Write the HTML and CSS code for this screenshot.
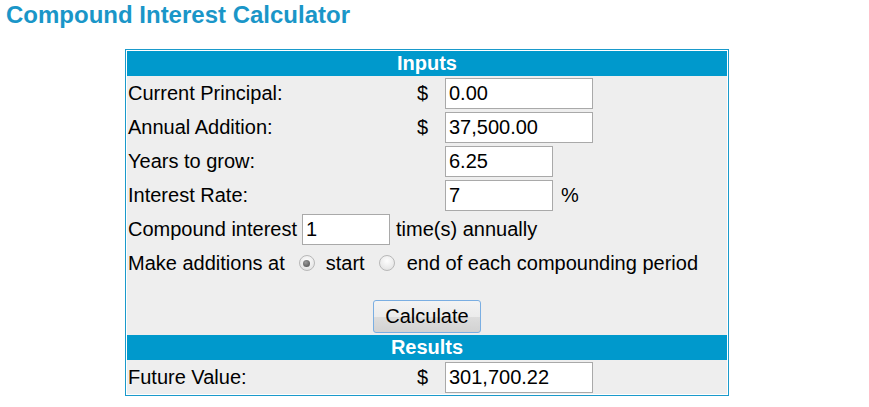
FILE: index.html
```html
<!DOCTYPE html>
<html>
<head>
<meta charset="utf-8">
<link rel="stylesheet" href="styles.css">
</head>
<body>
<h1 class="title">Compound Interest Calculator</h1>
<div class="calc">
  <div class="band">Inputs</div>
  <div class="row">
    <span class="label">Current Principal:</span>
    <span class="cur">$</span>
    <span><input class="field wide" type="text" value="0.00"></span>
  </div>
  <div class="row">
    <span class="label">Annual Addition:</span>
    <span class="cur">$</span>
    <span><input class="field wide" type="text" value="37,500.00"></span>
  </div>
  <div class="row">
    <span class="label">Years to grow:</span>
    <span class="cur"></span>
    <span><input class="field short" type="text" value="6.25"></span>
  </div>
  <div class="row">
    <span class="label">Interest Rate:</span>
    <span class="cur"></span>
    <span class="withunit"><input class="field short" type="text" value="7"><span class="unit">%</span></span>
  </div>
  <div class="line">
    <span>Compound interest</span>
    <input class="field tiny" type="text" value="1">
    <span>time(s) annually</span>
  </div>
  <div class="line">
    <span>Make additions at</span>
    <span class="radio checked" role="radio" aria-checked="true"></span>
    <span>start</span>
    <span class="radio" role="radio" aria-checked="false"></span>
    <span>end of each compounding period</span>
  </div>
  <div class="action">
    <button class="btn" type="button">Calculate</button>
  </div>
  <div class="band">Results</div>
  <div class="row">
    <span class="label">Future Value:</span>
    <span class="cur">$</span>
    <span><input class="field wide" type="text" value="301,700.22"></span>
  </div>
</div>
</body>
</html>
```
FILE: styles.css
```css
html, body {
  margin: 0;
  padding: 0;
  background: #ffffff;
}
body {
  font-family: "Liberation Sans", Arial, sans-serif;
  font-size: 20px;
  color: #000000;
}
.title {
  margin: 1px 0 0 6px;
  font-size: 24px;
  line-height: 28px;
  font-weight: bold;
  color: #1a96c8;
}
.calc {
  box-sizing: border-box;
  width: 604px;
  margin: 20px 0 0 125px;
  border: 1px solid #1a9acb;
  padding: 1px;
  background: #ffffff;
}
.band {
  height: 25px;
  line-height: 25px;
  background: #0099cc;
  color: #ffffff;
  font-weight: bold;
  text-align: center;
}
.row {
  display: grid;
  grid-template-columns: 289px 29px 1fr;
  align-items: center;
  padding: 1.5px 0;
  background: #eeeeee;
  line-height: 23px;
}
.label {
  padding-left: 1px;
}
.cur {
  padding-left: 1px;
}
.withunit {
  display: flex;
  align-items: center;
}
.unit {
  margin-left: 8px;
}
.field {
  box-sizing: border-box;
  height: 31px;
  margin: 0;
  border: 1px solid #a9a9a9;
  padding: 0 3px;
  font-family: "Liberation Sans", Arial, sans-serif;
  font-size: 20px;
  color: #000000;
  background: #ffffff;
}
.wide { width: 148px; }
.short { width: 108px; }
.tiny { width: 88px; margin: 0 6px 0 5px; }
.line {
  display: flex;
  align-items: center;
  height: 34px;
  padding-left: 1px;
  background: #eeeeee;
  line-height: 23px;
}
.radio {
  box-sizing: border-box;
  display: inline-block;
  flex: none;
  width: 16px;
  height: 16px;
  margin: 0 11px 0 14px;
  border: 1px solid #b8b8b8;
  border-radius: 50%;
  background: radial-gradient(circle at 50% 35%, #fdfdfd 0%, #ececec 55%, #dcdcdc 100%);
  position: relative;
}
.radio + span + .radio {
  margin-right: 12px;
}
.radio.checked::after {
  content: "";
  position: absolute;
  left: 3.5px;
  top: 3.5px;
  width: 7px;
  height: 7px;
  border-radius: 50%;
  background: radial-gradient(circle at 40% 35%, #9a9a9a 0%, #4a4a4a 100%);
}
.action {
  display: flex;
  justify-content: center;
  padding: 20px 0 2px;
  background: #eeeeee;
}
.btn {
  box-sizing: border-box;
  width: 108px;
  height: 33px;
  margin: 0;
  padding: 0;
  border: 1px solid #7aaee2;
  border-radius: 3px;
  background: linear-gradient(#f3f3f3 0%, #ececec 50%, #dddddd 51%, #d2d2d2 100%);
  font-family: "Liberation Sans", Arial, sans-serif;
  font-size: 20px;
  color: #000000;
}
```
